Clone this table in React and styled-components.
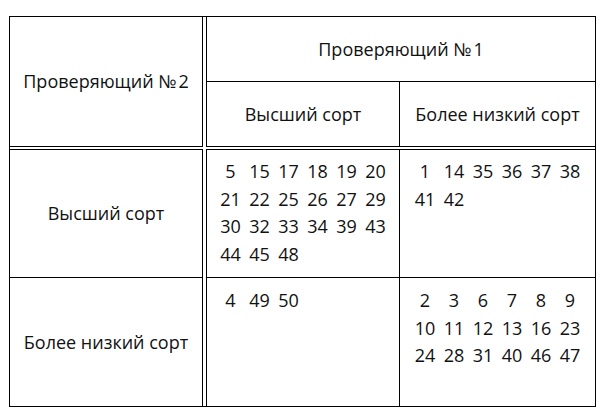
import React from "react";
import styled, { createGlobalStyle } from "styled-components";

const Global = createGlobalStyle`
  html, body { margin: 0; padding: 0; background: #fff; }
  body { font-family: "Open Sans", "Noto Sans", sans-serif; color: #111; }
`;

const Page = styled.div`
  padding: 16px 0 0 9px;
`;

const Table = styled.div`
  display: grid;
  grid-template-columns: 196px 193px 196px;
  grid-template-rows: 65px 67px 129px 128px;
  width: 585px;
  border: 1px solid #000;
`;

const Cell = styled.div`
  display: flex;
  align-items: ${(p) => (p.$top ? "flex-start" : "center")};
  justify-content: center;
  font-size: 18px;
  line-height: 27px;
  box-sizing: border-box;
  white-space: nowrap;
  ${(p) => (p.$col === 1 ? "border-right: 1px solid #000; margin-right: 3px;" : "")}
  ${(p) => (p.$col === 2 ? "border-left: 1px solid #000;" : "")}
  ${(p) => (p.$col === 3 ? "border-left: 1px solid #000;" : "")}
  ${(p) => (p.$headEnd ? "border-bottom: 1px solid #000; margin-bottom: 2px;" : "")}
  ${(p) => (p.$underline ? "border-bottom: 1px solid #000;" : "")}
  ${(p) => (p.$overline ? "border-top: 1px solid #000;" : "")}
  ${(p) => (p.$span ? `grid-column: ${p.$span};` : "")}
  ${(p) => (p.$rows ? `grid-row: ${p.$rows};` : "")}
  padding-top: ${(p) => p.$pt || 0}px;
`;

const Numbers = styled.div`
  display: grid;
  grid-template-columns: repeat(6, 29px);
  grid-auto-rows: 27.5px;
  align-items: center;
`;

const Num = styled.span`
  text-align: center;
  font-size: 18px;
`;

const NumberGrid = ({ values }) => (
  <Numbers>
    {values.map((v) => (
      <Num key={v}>{v}</Num>
    ))}
  </Numbers>
);

const a = [5, 15, 17, 18, 19, 20, 21, 22, 25, 26, 27, 29, 30, 32, 33, 34, 39, 43, 44, 45, 48];
const b = [1, 14, 35, 36, 37, 38, 41, 42];
const c = [4, 49, 50];
const d = [2, 3, 6, 7, 8, 9, 10, 11, 12, 13, 16, 23, 24, 28, 31, 40, 46, 47];

export default function App() {
  return (
    <>
      <Global />
      <Page>
        <Table>
          <Cell $col={1} $rows="1 / 3" $headEnd>Проверяющий №{"\u200A"}2</Cell>
          <Cell $col={2} $span="2 / 4" $underline>Проверяющий №{"\u200A"}1</Cell>
          <Cell $col={2} $headEnd>Высший сорт</Cell>
          <Cell $col={3} $headEnd>Более низкий сорт</Cell>

          <Cell $col={1} $overline $underline>Высший сорт</Cell>
          <Cell $col={2} $overline $underline $top $pt={8}>
            <NumberGrid values={a} />
          </Cell>
          <Cell $col={3} $overline $underline $top $pt={8}>
            <NumberGrid values={b} />
          </Cell>

          <Cell $col={1}>Более низкий сорт</Cell>
          <Cell $col={2} $top $pt={9}>
            <NumberGrid values={c} />
          </Cell>
          <Cell $col={3} $top $pt={9}>
            <NumberGrid values={d} />
          </Cell>
        </Table>
      </Page>
    </>
  );
}
